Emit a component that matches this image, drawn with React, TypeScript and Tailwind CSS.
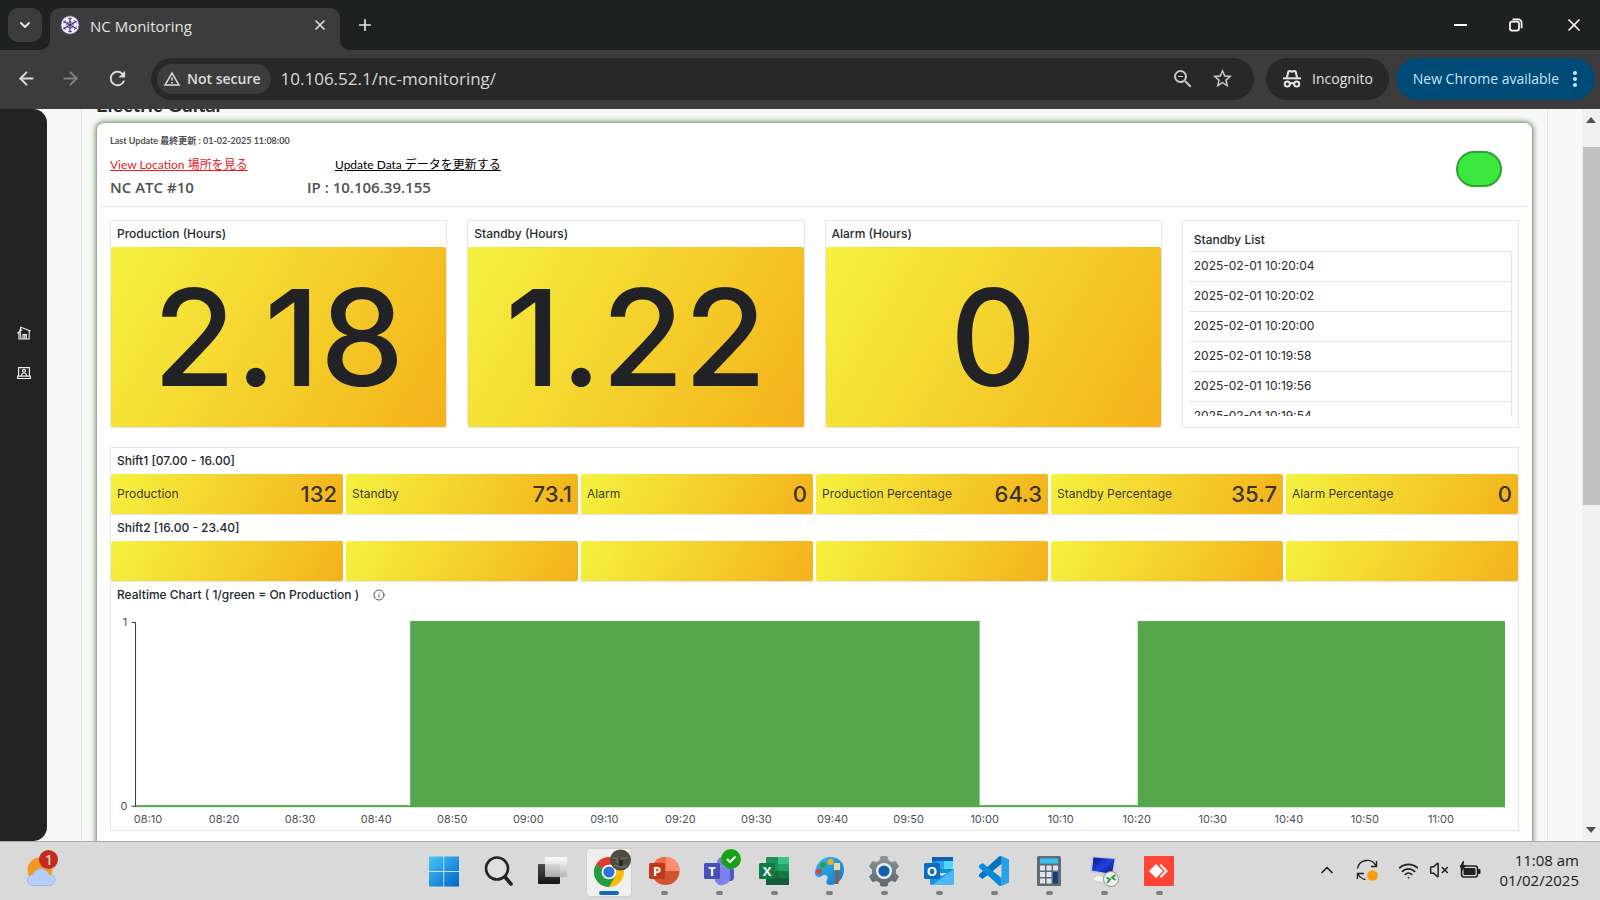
import type { ReactNode } from 'react';
import { ArrowLeft, ArrowRight, ChevronDown, ChevronUp, Plus, X, Info, Wifi, VolumeX } from 'lucide-react';
import { MdRefresh, MdStarOutline, MdOutlineWarningAmber, MdZoomOut, MdMoreVert } from 'react-icons/md';

const UI = "font-['Open_Sans','Noto_Sans',sans-serif]";
const ROUND = "font-['Lato','Noto_Sans_CJK_JP',sans-serif]";
const INTER = "font-['Inter',sans-serif]";
const GOLD = 'bg-[linear-gradient(120deg,#f5f23f,#f4b11b)]';

function Incognito() {
  return (
    <svg viewBox="0 0 20 20" className="size-5" fill="none" stroke="#e3e3e3" strokeWidth="2" aria-hidden="true">
      <path d="M1 9.3h18" />
      <path d="M5 8.5 6.4 2.2 8 2l2 .7 2-.7 1.6.2L15 8.5" strokeLinejoin="round" />
      <circle cx="5.3" cy="15" r="2.6" />
      <circle cx="14.7" cy="15" r="2.6" />
      <path d="M7.8 14.6c1.4-.9 3-.9 4.4 0" />
    </svg>
  );
}

function Favicon() {
  return (
    <svg viewBox="0 0 20 20" className="size-5 shrink-0" aria-hidden="true">
      <circle cx="10" cy="10" r="9.2" fill="#f4f0fa" stroke="#5a3796" strokeWidth="0.8" />
      <g stroke="#4b2e83" strokeWidth="1.2" fill="none">
        <path d="M10 2.4v15.2M3.4 6.2l13.2 7.6M16.6 6.2 3.4 13.800" />
        <circle cx="10" cy="10" r="3.200" strokeWidth="0.8" />
        <path d="M8 3.6h4M8 16.4h4M3.7 8.4l2-3.4M16.3 11.6l-2 3.4M3.7 11.6l2 3.4M16.3 8.4l-2-3.4" strokeWidth="0.8" />
      </g>
    </svg>
  );
}

function TabStrip() {
  return (
    <header className="flex h-[50px] shrink-0 items-end bg-[#1f2020] pl-2 text-[#e3e3e3]">
      <button aria-label="Search tabs" className="mb-2 flex size-[34px] items-center justify-center rounded-[10px] bg-[#3c3c3c]">
        <ChevronDown size={16} strokeWidth={3} />
      </button>
      <div className="relative ml-2 flex h-[42px] w-[290px] items-center rounded-t-[10px] bg-[#3c3c3c] pb-2 pl-2.5 pr-3">
        <svg viewBox="0 0 10 10" className="absolute -left-2.5 bottom-0 size-2.5" aria-hidden="true"><path d="M10 0v10H0A10 10 0 0 0 10 0Z" fill="#3c3c3c" /></svg>
        <svg viewBox="0 0 10 10" className="absolute -right-2.5 bottom-0 size-2.5" aria-hidden="true"><path d="M0 0v10h10A10 10 0 0 1 0 0Z" fill="#3c3c3c" /></svg>
        <Favicon />
        <span className="ml-2.5 flex-1 pt-0.5 text-[15px] leading-5">NC Monitoring</span>
        <button aria-label="Close tab"><X size={16} strokeWidth={2.4} /></button>
      </div>
      <button aria-label="New tab" className="mb-4 ml-4"><Plus size={18} strokeWidth={2.3} /></button>
      <div className="ml-auto flex h-full items-center gap-10 pr-4 text-white">
        <button aria-label="Minimize" className="flex w-4 justify-center"><span className="block h-0.5 w-[13px] bg-white" /></button>
        <button aria-label="Restore">
          <svg viewBox="0 0 16 16" className="size-4" fill="none" stroke="white" strokeWidth="1.7"><rect x="2" y="4.6" width="9" height="9" rx="2" /><path d="M4.6 2.4h5.6a3.4 3.4 0 0 1 3.4 3.4v5.4" /></svg>
        </button>
        <button aria-label="Close window"><X size={20} strokeWidth={2} /></button>
      </div>
    </header>
  );
}

function Toolbar() {
  return (
    <div className="flex h-[59px] shrink-0 items-center bg-[#3c3c3c] pb-0.5 pl-4 pr-[5px] text-[#dcdcdc]">
      <button aria-label="Back" className="w-6"><ArrowLeft size={21} strokeWidth={2.2} /></button>
      <button aria-label="Forward" className="ml-5 w-6 text-[#808080]"><ArrowRight size={21} strokeWidth={2.2} /></button>
      <button aria-label="Reload" className="ml-[22px]"><MdRefresh size={23} /></button>
      <div className="ml-[22px] flex h-[42px] flex-1 items-center gap-2.5 rounded-full bg-[#282828] pl-1.5 pr-5">
        <button className="flex h-[30px] items-center gap-1.5 rounded-full bg-[#3c3c3c] pl-1.5 pr-2.5">
          <MdOutlineWarningAmber size={18} />
          <span className="text-[14px] font-semibold leading-5">Not secure</span>
        </button>
        <input aria-label="Address" defaultValue="10.106.52.1/nc-monitoring/" className="min-w-0 flex-1 bg-transparent text-[17px] text-[#d8d8d8] outline-none" />
        <button aria-label="Zoom" className="mr-1.5"><MdZoomOut size={24} className="text-[#c7c7c7]" /></button>
        <button aria-label="Bookmark"><MdStarOutline size={23} className="text-[#c7c7c7]" /></button>
      </div>
      <button className="ml-3 flex h-[42px] w-[123px] items-center justify-center gap-2.5 rounded-full bg-[#282828] text-[14px] text-[#e3e3e3]">
        <Incognito />Incognito
      </button>
      <button className="ml-[7px] flex h-[42px] w-[199px] items-center justify-end rounded-full bg-[#004a77] pr-2 text-[14px] text-[#c2e7ff]">
        New Chrome available<MdMoreVert size={24} className="ml-1" />
      </button>
    </div>
  );
}

function SideNav() {
  return (
    <nav aria-label="Main" className="flex w-[47px] shrink-0 flex-col items-center gap-[26px] rounded-r-[14px] bg-[#232323] pt-[217px]">
      <a href="#home" aria-label="Home">
        <svg viewBox="0 0 14 14" className="size-3.5" fill="none" stroke="#eee" strokeWidth="1.1" aria-hidden="true">
          <path d="M.4 7.3 5 3.8M3.6 1.2v3.6M3.2.9 13.6 5M1.9 6.6V13h10.3V4.8M2.8 3.2 4 12.4M6 13V8.6h3.4V13M7.7 8.6V13" />
        </svg>
      </a>
      <a href="#machines" aria-label="Machines">
        <svg viewBox="0 0 14 14" className="size-3.5" fill="none" stroke="#eee" strokeWidth="1.2" aria-hidden="true">
          <path d="M1.6 9.8V1.6h10.8v8.2M.7 10.2h12.6v2.3H.7z" /><circle cx="7" cy="4.8" r="1.5" /><path d="M4.7 10V8.5A1.8 1.8 0 0 1 6.5 7h1a1.8 1.8 0 0 1 1.8 1.5V10" />
        </svg>
      </a>
    </nav>
  );
}

const stats = [
  { label: 'Production (Hours)', value: '2.18' },
  { label: 'Standby (Hours)', value: '1.22' },
  { label: 'Alarm (Hours)', value: '0' },
];

const standby = ['2025-02-01 10:20:04', '2025-02-01 10:20:02', '2025-02-01 10:20:00', '2025-02-01 10:19:58', '2025-02-01 10:19:56', '2025-02-01 10:19:54'];

const shift = [
  { label: 'Production', value: '132' },
  { label: 'Standby', value: '73.1' },
  { label: 'Alarm', value: '0' },
  { label: 'Production Percentage', value: '64.3' },
  { label: 'Standby Percentage', value: '35.7' },
  { label: 'Alarm Percentage', value: '0' },
];

const times = ['08:10', '08:20', '08:30', '08:40', '08:50', '09:00', '09:10', '09:20', '09:30', '09:40', '09:50', '10:00', '10:10', '10:20', '10:30', '10:40', '10:50', '11:00'];

function StatCard({ label, value }: { label: string; value: string }) {
  return (
    <section className="flex flex-col border border-[#e4e5e6]">
      <h2 className="px-1.5 py-1 text-[12px] font-medium leading-[18px]">{label}</h2>
      <div className={`flex flex-1 items-center justify-center rounded-[2px] ${GOLD}`}>
        <span className="text-[134px] font-medium leading-none text-[#202226]">{value}</span>
      </div>
    </section>
  );
}

function StandbyList() {
  return (
    <section className="h-52 border border-[#e4e5e6] px-1.5 pb-3 pt-2">
      <div className="h-[187px] overflow-hidden">
        <table className="w-full border-collapse text-left text-[12px]">
          <thead>
            <tr className="h-[22px]"><th className="px-[5px] py-0 font-medium">Standby List</th></tr>
          </thead>
          <tbody className="border-r border-[#e4e5e6]">
            {standby.map((t) => (
              <tr key={t} className="h-[30px] border-t border-[#e4e5e6]"><td className="px-[5px] py-0">{t}</td></tr>
            ))}
          </tbody>
        </table>
      </div>
    </section>
  );
}

function ShiftRow({ title, cells }: { title: string; cells: { label: string; value: string }[] }) {
  return (
    <section>
      <h2 className="px-1.5 py-1 text-[12px] font-medium leading-[18px]">{title}</h2>
      <div className="grid grid-cols-6 gap-[3px] border-b border-[#e4e5e6]">
        {cells.map((c, i) => (
          <div key={i} className={`flex h-10 items-center justify-between rounded-[2px] px-1.5 text-[#202226]/90 ${GOLD}`}>
            <span className="text-[12px]">{c.label}</span>
            <span className="text-[22px] font-medium">{c.value}</span>
          </div>
        ))}
      </div>
    </section>
  );
}

function RealtimeChart() {
  return (
    <section>
      <h2 className="flex items-center gap-3.5 px-1.5 py-1 text-[12px] font-medium leading-[18px]">
        Realtime Chart ( 1/green = On Production )
        <Info size={12} className="text-[#555]" />
      </h2>
      <svg viewBox="0 0 1406 222" className="block w-full" role="img" aria-label="Production state over time">
        <g fill="#56a64b">
          <rect x="299" y="13" width="569" height="186" />
          <rect x="1026" y="13" width="367" height="186" />
          <rect x="24" y="197" width="1369" height="2" />
        </g>
        <path d="M20.500 14.500h4V198h-4" fill="none" stroke="#3c3f42" />
        <g fill="#4d5156" fontSize="11" textAnchor="middle">
          <text x="14" y="18">1</text>
          <text x="13" y="202">0</text>
          {times.map((t, i) => (
            <text key={t} x={37 + i * 76} y="215">{t}</text>
          ))}
        </g>
      </svg>
    </section>
  );
}

function Monitor() {
  return (
    <main className="flex min-h-0 flex-1 overflow-hidden bg-[#f8f8f8]">
      <SideNav />
      <div className="mx-[34px] flex flex-1 flex-col overflow-hidden border-x border-[#e6e3e4] px-3.5">
        <h1 className={`-mt-[19px] text-[20px] font-bold leading-7 text-[#2b2b2b] ${ROUND}`}>Electric Guitar</h1>
        <article className="-mb-4 mt-1 flex-1 rounded-t-lg border border-[#9cab97] bg-white px-[3px] shadow-[0_0_5px_1px_#8aa284]">
          <div className={`flex items-end justify-between border-b border-[#dcdfe1] pb-[7px] pl-2.5 pr-[27px] pt-2.5 text-[#505050] ${ROUND}`}>
            <div className="w-[430px]">
              <p className="text-[9px] font-bold leading-4">Last Update 最終更新 : 01-02-2025 11:08:00</p>
              <div className="mt-0.5 grid grid-cols-[225px_1fr] text-[12px] leading-7">
                <a href="#location" className="text-[#e8201f] underline">View Location 場所を見る</a>
                <a href="#update" className="text-black underline">Update Data データを更新する</a>
              </div>
              <div className="-mt-1 grid grid-cols-[197px_1fr] text-[15px] font-semibold leading-6 font-['Open_Sans',sans-serif]">
                <span>NC ATC #10</span><span>IP : 10.106.39.155</span>
              </div>
            </div>
            <span role="img" aria-label="Running" className="mb-3 h-9 w-[46px] rounded-[18px] border-2 border-[#2fa336] bg-[#3ce83f]" />
          </div>
          <div className={`px-2.5 pt-[13px] text-[#24292e] ${INTER}`}>
            <div className="grid grid-cols-4 gap-5">
              {stats.map((s) => <StatCard key={s.label} {...s} />)}
              <StandbyList />
            </div>
            <div className="mt-[19px] border border-[#e4e5e6]">
              <ShiftRow title="Shift1 [07.00 - 16.00]" cells={shift} />
              <ShiftRow title="Shift2 [16.00 - 23.40]" cells={shift.map(() => ({ label: '', value: '' }))} />
              <RealtimeChart />
            </div>
          </div>
        </article>
      </div>
      <div className="flex w-[18px] shrink-0 flex-col items-center bg-[#f0f0f0] py-2" aria-hidden="true">
        <svg viewBox="0 0 10 6" className="h-1.5 w-2.5"><path d="M0 6 5 0l5 6z" fill="#505050" /></svg>
        <div className="mt-6 h-[358px] w-[17px] self-end bg-[#c1c1c1]" />
        <svg viewBox="0 0 10 6" className="mt-auto h-1.5 w-2.5"><path d="M0 0h10L5 6z" fill="#505050" /></svg>
      </div>
    </main>
  );
}

function AppIcon({ label, children, active, running = true }: { label: string; children: ReactNode; active?: boolean; running?: boolean }) {
  return (
    <button aria-label={label} className="flex h-[59px] w-[55px] flex-col items-center pt-1.5">
      <span className={active ? 'flex h-[49px] w-[46px] flex-col items-center rounded border border-[#cfcfcf] bg-[#efefef] pt-1.5' : 'flex h-[49px] w-[46px] flex-col items-center pt-[7px]'}>
        <svg viewBox="0 0 32 32" className="size-8 overflow-visible" aria-hidden="true">{children}</svg>
        {active ? <i className="mt-1 h-1 w-5 shrink-0 rounded-full bg-[#0f6cbd]" /> : running && <i className="mt-1 h-1 w-[7px] shrink-0 rounded-full bg-[#7d7d7d]" />}
      </span>
    </button>
  );
}

function TaskbarApps() {
  return (
    <div className="flex">
      <svg className="absolute size-0" aria-hidden="true">
        <defs>
          <linearGradient id="win" x1="0" y1="0" x2="30" y2="30" gradientUnits="userSpaceOnUse"><stop stopColor="#4cc9fb" /><stop offset="1" stopColor="#0069cc" /></linearGradient>
          <linearGradient id="dark" x1="0" y1="0" x2="0" y2="1"><stop stopColor="#4d4d4d" /><stop offset="1" stopColor="#151515" /></linearGradient>
          <linearGradient id="lite" x1="0" y1="0" x2="0" y2="1"><stop stopColor="#fff" /><stop offset="1" stopColor="#b5b5b5" /></linearGradient>
          <linearGradient id="pal" x1="0" y1="0" x2="1" y2="1"><stop stopColor="#35b8f1" /><stop offset="1" stopColor="#1179cc" /></linearGradient>
          <linearGradient id="gear" x1="0" y1="0" x2="0" y2="1"><stop stopColor="#8b959c" /><stop offset="1" stopColor="#5c666e" /></linearGradient>
          <linearGradient id="scr" x1="0" y1="0" x2="1" y2="1"><stop stopColor="#0b1496" /><stop offset=".5" stopColor="#2240dd" /><stop offset="1" stopColor="#0c1278" /></linearGradient>
        </defs>
      </svg>
      <AppIcon label="Start" running={false}><path fill="url(#win)" d="M1 1.500h14.300V16H1zM16.200 1.500H31V16H16.200zM1 16.900h14.300V31.500H1zM16.200 16.900H31v14.600H16.200z" /></AppIcon>
      <AppIcon label="Search" running={false}><circle cx="14" cy="13.500" r="11" fill="#e0e0e0" stroke="#252525" strokeWidth="2.600" /><path d="m22 22 6 7" stroke="#252525" strokeWidth="3.600" strokeLinecap="round" /></AppIcon>
      <AppIcon label="Task view" running={false}><rect x="0" y="9" width="22" height="20" rx="1" fill="url(#dark)" /><rect x="7" y="2" width="22" height="20" rx="1" fill="url(#lite)" opacity=".92" /></AppIcon>
      <AppIcon label="Chrome" active>
        <circle cx="16" cy="17" r="15" fill="#fbbc05" />
        <path d="M16 17 3 9.500A15 15 0 0 1 29 9.500H16z" fill="#e33b2e" />
        <path d="M3 9.500A15 15 0 0 0 16 32l6.500-11.250L16 17z" fill="#259b45" />
        <circle cx="16" cy="17" r="7.300" fill="#fff" /><circle cx="16" cy="17" r="5.600" fill="#2d73e0" />
        <circle cx="27.500" cy="5" r="10.500" fill="#4f4b43" />
        <path d="M19 3h5v4h5V3h6" stroke="#6f6a5c" strokeWidth="1.500" fill="none" /><path d="M21 10q6 3 13 1" stroke="#6a6658" strokeWidth="2" fill="none" /><path d="M26 5h4v6h-4z" fill="#2b2926" />
      </AppIcon>
      <AppIcon label="PowerPoint">
        <circle cx="17.500" cy="16" r="14" fill="#d35230" /><path d="M17.500 2a14 14 0 0 1 14 14h-14z" fill="#ff8f6b" /><path d="M17.500 2v14h-14a14 14 0 0 1 14-14z" fill="#ed6c47" />
        <rect x="1" y="8" width="16" height="16" rx="1.500" fill="#bf391b" /><text x="9" y="20.500" fontSize="13" fontWeight="700" fill="#fff" textAnchor="middle">P</text>
      </AppIcon>
      <AppIcon label="Teams">
        <circle cx="19" cy="7" r="5" fill="#7b83eb" /><rect x="22" y="12" width="9" height="14" rx="4" fill="#5059c9" /><path d="M12 12h15v10a8 8 0 0 1-15 4z" fill="#7b83eb" />
        <rect x="1" y="8" width="16" height="16" rx="1.500" fill="#4650ba" /><text x="9" y="20.500" fontSize="13" fontWeight="700" fill="#fff" textAnchor="middle">T</text>
        <circle cx="28" cy="4" r="10" fill="#17a117" /><path d="m24 4 3 3 5.500-5.500" fill="none" stroke="#fff" strokeWidth="2" />
      </AppIcon>
      <AppIcon label="Excel">
        <path d="M8 3.500Q8 2 9.500 2H20v28H9.500Q8 30 8 28.500z" fill="#1f8f57" /><path d="M20 2h11v7H20z" fill="#33c481" /><path d="M20 9h11v7H20z" fill="#21a366" /><path d="M20 16h11v7H20z" fill="#107c41" /><path d="M8 23h23v7H8z" fill="#185c37" /><path d="M8 16h12v7H8z" fill="#17683c" />
        <rect x="1" y="8" width="16" height="16" rx="1.500" fill="#107c41" /><text x="9" y="20.500" fontSize="13" fontWeight="700" fill="#fff" textAnchor="middle">X</text>
      </AppIcon>
      <AppIcon label="Paint">
        <path d="M17 2c9 0 14 5.500 14 12.500C31 23 25 30 17 30c-4 0-4-3-3-5s1-5-2-5-4 3-7 2-4-4-2-9C5 7 10 2 17 2z" fill="url(#pal)" />
        <circle cx="10" cy="10" r="3" fill="#2e9c47" /><circle cx="17.500" cy="7" r="3" fill="#f4b016" /><circle cx="6" cy="16.500" r="2.800" fill="#d34b2c" />
        <path d="M21 8h6v7h-6z" fill="#ead6b4" /><path d="M22.500 15h3v14h-3z" fill="#9c5a22" />
      </AppIcon>
      <AppIcon label="Settings">
        <path d="m13 1.500 6 0 1 4 3.500 2 4-1 3 5-3 3v4l3 3-3 5-4-1-3.500 2-1 3.500h-6l-1-3.500-3.500-2-4 1-3-5 3-3v-4l-3-3 3-5 4 1 3.500-2z" fill="url(#gear)" stroke="url(#gear)" strokeLinejoin="round" />
        <circle cx="16" cy="16" r="8" fill="#e8eef3" /><circle cx="16" cy="16" r="5.600" fill="#1261ae" />
      </AppIcon>
      <AppIcon label="Outlook">
        <path d="M9 2h21v16H9z" fill="#1490df" /><path d="M9 2h21v4H9z" fill="#0f5fae" /><path d="M20 6h10v8H20z" fill="#50d9ff" /><path d="M14 6h7v8h-7z" fill="#28a8ea" /><path d="M7 14l12 7 12-7v14q0 2-2 2H9q-2 0-2-2z" fill="#1b94e0" /><path d="m31 14-22 16h20q2 0 2-2z" fill="#4db8f5" />
        <rect x="1" y="8" width="16" height="16" rx="1.500" fill="#0f6cbd" /><text x="9" y="20.500" fontSize="13" fontWeight="700" fill="#fff" textAnchor="middle">O</text>
      </AppIcon>
      <AppIcon label="Visual Studio Code">
        <path d="M23.500 1 31 4.500v23L23.500 31z" fill="#2a9fec" /><path d="M23.500 1v8L4.500 24 1 21.500v-2L21 1.600Q22 .8 23.500 1z" fill="#0273bc" /><path d="M23.500 31v-8L4.500 8 1 10.500v2L21 30.400q1 .8 2.500.6z" fill="#078ad6" />
      </AppIcon>
      <AppIcon label="Calculator">
        <rect x="4" y="1" width="24" height="30" rx="1.500" fill="#5f6b75" /><path d="M7 3.500h18v5H7z" fill="#35c4f0" />
        <path d="M7 10.500h5v5H7zM13.500 10.500h5v5h-5zM20 10.500h5v5h-5zM7 17h5v5H7zM13.500 17h5v5h-5zM7 23.500h5v5H7zM13.500 23.500h5v5h-5z" fill="#dfe5ea" /><path d="M20 17h5v11.500h-5z" fill="#103f82" />
      </AppIcon>
      <AppIcon label="Remote Desktop">
        <path d="m9 20 9 2-1 5q-8 1.500-13-3z" fill="#f0f1f3" stroke="#b4b8bf" strokeWidth=".6" /><path d="m4 1 24 2-3 18-23-4z" fill="#c3c8d2" /><path d="m5.500 2.500 21 1.500-2.500 15-20-3.500z" fill="url(#scr)" /><circle cx="23" cy="24" r="7.500" fill="#eef1ee" stroke="#8f9595" /><path d="m18.500 22.500 3.500 2-3 3.500M27.500 20l-3.500 2.500 3.500 2.500" fill="none" stroke="#23962e" strokeWidth="1.800" />
      </AppIcon>
      <AppIcon label="AnyDesk">
        <path d="M1 1h30v30H1z" fill="#ff4438" /><path d="m6 16 7-7 7 7-7 7zM16.500 10.500l1.500-1.500 7 7-7 7-1.500-1.500 5.500-5.500z" fill="#fff" />
      </AppIcon>
    </div>
  );
}

function Taskbar() {
  return (
    <footer className="flex h-[59px] shrink-0 items-start border-t border-[#adadad] bg-[#d9d9d9] text-[#202020]">
      <div className="flex-1 pl-6 pt-2">
        <button aria-label="Weather, 1 alert" className="block">
          <svg viewBox="0 0 34 38" className="h-[38px] w-[34px]" aria-hidden="true">
            <circle cx="16" cy="20" r="12.500" fill="#f39a1e" />
            <path d="M9 35.500a5.500 5.500 0 0 1 0-11 8.500 8.500 0 0 1 16 0 5.500 5.500 0 0 1 1 11z" fill="#b5cff8" stroke="#8fb0ea" strokeWidth=".8" />
            <circle cx="24.500" cy="9.500" r="9.500" fill="#c42b1c" /><text x="25" y="14.500" fontSize="14" fill="#fff" textAnchor="middle">1</text>
          </svg>
        </button>
      </div>
      <TaskbarApps />
      <div className="flex h-[58px] flex-1 items-center justify-end pb-0.5 pr-[21px]">
        <button aria-label="Show hidden icons" className="mr-[19px]"><ChevronUp size={20} strokeWidth={2} /></button>
        <button aria-label="Updates" className="mr-5">
          <svg viewBox="0 0 22 22" className="size-[22px]" fill="none" stroke="#202020" strokeWidth="1.400" aria-hidden="true"><path d="M1.500 9.500A9.800 9.800 0 0 1 20 7M20.500 2v5.500H15M1.500 20v-5.500H8M2 15q3 5 7.500 5.500" /><circle cx="16.500" cy="16.500" r="5.300" fill="#ff9b0b" stroke="none" /></svg>
        </button>
        <button aria-label="Network, sound and battery" className="mr-[18px] flex items-center gap-2.5">
          <Wifi size={21} strokeWidth={2} />
          <VolumeX size={20} strokeWidth={1.800} />
          <svg viewBox="0 0 22 18" className="h-[18px] w-[22px]" aria-hidden="true"><rect x="2.500" y="5" width="16" height="11" rx="2.500" fill="none" stroke="#202020" strokeWidth="1.500" /><rect x="4.500" y="7" width="12" height="7" rx="1" fill="#202020" /><path d="M19.500 8.500h1.500v4h-1.500zM4.500 0 1 6h2.500L2.500 10l4-5.500H4z" fill="#202020" stroke="#202020" /></svg>
        </button>
        <div className="text-right text-[15px] leading-5"><p>11:08 am</p><p>01/02/2025</p></div>
      </div>
    </footer>
  );
}

export default function App() {
  return (
    <div className={`flex h-screen flex-col overflow-hidden ${UI}`}>
      <TabStrip />
      <Toolbar />
      <Monitor />
      <Taskbar />
    </div>
  );
}
